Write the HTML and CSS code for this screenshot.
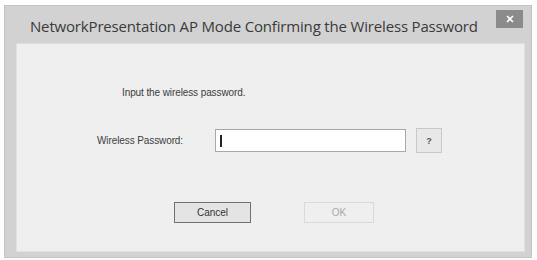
FILE: index.html
```html
<!DOCTYPE html>
<html>
<head>
<meta charset="utf-8">
<link rel="stylesheet" href="styles.css">
</head>
<body>
<div class="window">
  <div class="titlebar">
    <div class="title">NetworkPresentation AP Mode Confirming the Wireless Password</div>
    <div class="close"><svg width="10" height="8" viewBox="0 0 10 8"><path d="M2 1 L8 7 M8 1 L2 7" stroke="#fff" stroke-width="1.6"/></svg></div>
  </div>
  <div class="content">
    <div class="prompt">Input the wireless password.</div>
    <div class="row">
      <label class="label">Wireless Password:</label>
      <div class="input"><span class="caret"></span></div>
      <div class="help">?</div>
    </div>
    <div class="buttons">
      <div class="btn cancel">Cancel</div>
      <div class="btn ok">OK</div>
    </div>
  </div>
</div>
</body>
</html>
```
FILE: styles.css
```css
html, body {
  margin: 0;
  padding: 0;
  background: #fff;
}
body {
  padding: 5px 0 0 4px;
  font-family: "Liberation Sans", Arial, sans-serif;
}
.window {
  width: 528px;
  height: 253px;
  background: #d2d2d2;
  display: flex;
  flex-direction: column;
  box-sizing: border-box;
  border: 1px solid #c4c4c4;
}
.titlebar {
  height: 37px;
  display: flex;
  align-items: flex-start;
}
.title {
  font-family: "Open Sans", "Noto Sans", sans-serif;
  font-size: 15px;
  color: #3a3a3a;
  padding: 10px 0 0 25px;
  letter-spacing: -0.17px;
  white-space: nowrap;
}
.close {
  margin-left: auto;
  margin-right: 8px;
  margin-top: 4px;
  width: 27px;
  height: 18px;
  background: #8b8b8b;
  display: flex;
  align-items: center;
  justify-content: center;
}
.content {
  flex: 1;
  margin: 0 6px 5px 11px;
  background: #efefef;
  border: 1px solid #e0e0e0;
}
.prompt {
  font-size: 10px;
  color: #3c3c3c;
  margin: 43px 0 0 105px;
  letter-spacing: -0.1px;
}
.row {
  display: flex;
  align-items: center;
  margin: 30px 0 0 80px;
}
.label {
  font-size: 10px;
  color: #3c3c3c;
  width: 118px;
  letter-spacing: -0.1px;
}
.input {
  width: 191px;
  height: 23px;
  background: #fff;
  border: 1px solid #a8a8a8;
  display: flex;
  align-items: center;
  padding-left: 4px;
  box-sizing: border-box;
}
.caret {
  width: 2px;
  height: 12px;
  background: #222;
}
.help {
  margin-left: 10px;
  width: 26px;
  height: 25px;
  box-sizing: border-box;
  border: 1px solid #c8c8c8;
  background: #e8e8e8;
  font-size: 9px;
  font-weight: bold;
  color: #555;
  display: flex;
  align-items: center;
  justify-content: center;
}
.buttons {
  display: flex;
  margin: 49px 0 0 157px;
  gap: 53px;
}
.btn {
  width: 77px;
  height: 21px;
  box-sizing: border-box;
  display: flex;
  align-items: center;
  justify-content: center;
  font-size: 10px;
}
.cancel {
  border: 1px solid #707070;
  background: #e4e4e4;
  color: #333;
}
.ok {
  width: 70px;
  border: 1px solid #dadada;
  background: #efefef;
  color: #a8a8a8;
}
```
